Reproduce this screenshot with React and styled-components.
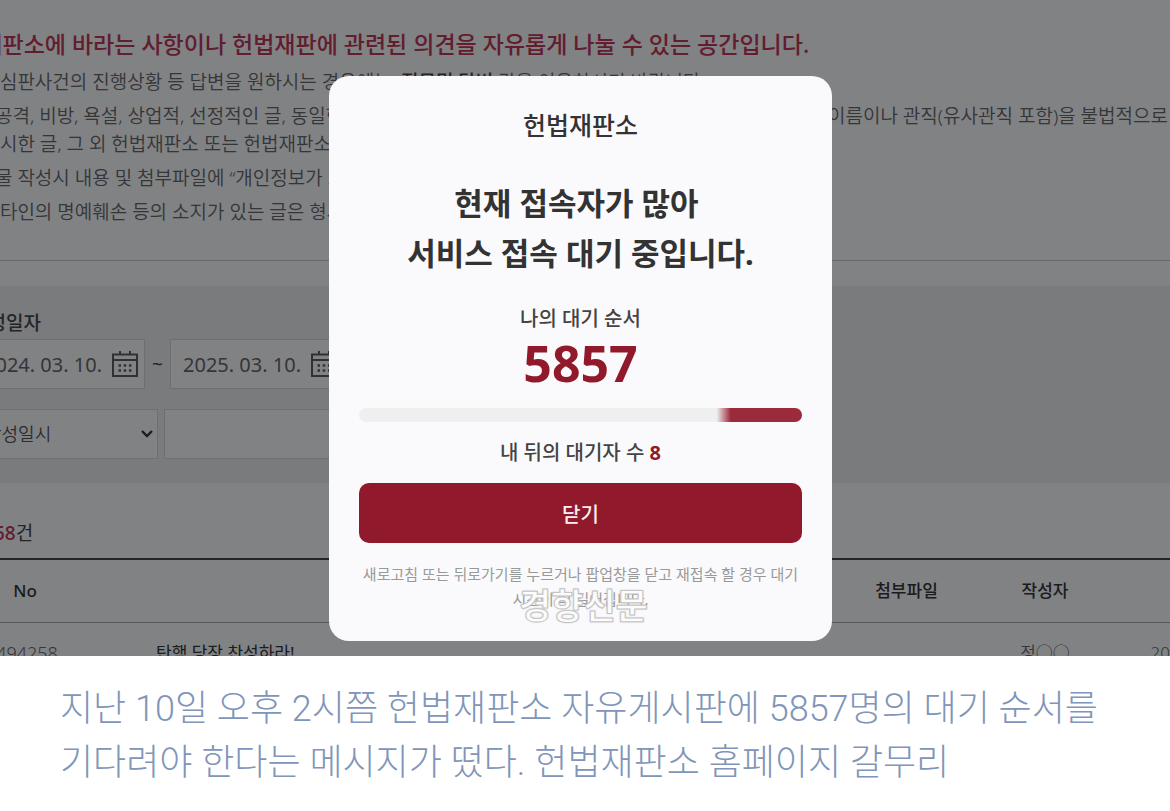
import React, { useState } from 'react'
import styled, { createGlobalStyle } from 'styled-components'

function App() {
    const [open, setOpen] = useState(true)
    return (
        <Article>
            <GlobalStyle />
            <Screen>
                <Board>
                    <Notice>
                        <h2>헌법재판소에 바라는 사항이나 헌법재판에 관련된 의견을 자유롭게 나눌 수 있는 공간입니다.</h2>
                        <ul>
                            <li>헌법 심판사건의 진행상황 등 답변을 원하시는 경우에는, <b>질문및 답변</b> 란을 이용하시기 바랍니다.</li>
                            <li>
                                <SplitLine>
                                    <span>인신공격, 비방, 욕설, 상업적, 선정적인 글, 동일한 내용의 글, 타인의</span>
                                    <span>이름이나 관직(유사관직 포함)을 불법적으로</span>
                                </SplitLine>
                                을 표시한 글, 그 외 헌법재판소 또는 헌법재판소의 운영에 반하는 글
                            </li>
                            <li>게시물 작성시 내용 및 첨부파일에 “개인정보가 포함되지 않도록 하시고</li>
                            <li>또한 타인의 명예훼손 등의 소지가 있는 글은 형사처벌을 받을 수 있습니다.</li>
                        </ul>
                    </Notice>
                    <Search>
                        <Label htmlFor="from">작성일자</Label>
                        <Row>
                            <DateBox>
                                <DateInput id="from" type="text" defaultValue="2024. 03. 10." />
                                <Calendar />
                            </DateBox>
                            <Tilde>~</Tilde>
                            <DateBox>
                                <DateInput type="text" aria-label="종료일" defaultValue="2025. 03. 10." />
                                <Calendar />
                            </DateBox>
                        </Row>
                        <Row>
                            <SelectBox>
                                <Select aria-label="정렬">
                                    <option>작성일시</option>
                                </Select>
                                <Chevron viewBox="0 0 14 10">
                                    <path d="M2 2l5 5 5-5" fill="none" stroke="#333" strokeWidth="2.4" />
                                </Chevron>
                            </SelectBox>
                            <Keyword type="text" aria-label="검색어" />
                        </Row>
                    </Search>
                    <Count>총 <b>494258</b>건</Count>
                    <Table>
                        <colgroup>
                            <col width="194" />
                            <col />
                            <col width="139" />
                            <col width="138" />
                            <col width="168" />
                        </colgroup>
                        <thead>
                            <tr>
                                <th>No</th>
                                <th>제목</th>
                                <th>첨부파일</th>
                                <th>작성자</th>
                                <th>일시</th>
                            </tr>
                        </thead>
                        <tbody>
                            <tr>
                                <Number>494258</Number>
                                <Subject><a href="#">탄핵 당장 찬성하라!</a></Subject>
                                <td></td>
                                <td>정○○</td>
                                <td>2025. 03. 10</td>
                            </tr>
                        </tbody>
                    </Table>
                </Board>
                {open && (
                    <Overlay>
                        <Dialog role="dialog" aria-label="헌법재판소">
                            <Site>헌법재판소</Site>
                            <Message>현재 접속자가 많아&nbsp;<br />서비스 접속 대기 중입니다.</Message>
                            <Info>나의 대기 순서</Info>
                            <Order>5857</Order>
                            <Bar role="progressbar" aria-label="대기 진행"><i /></Bar>
                            <Info>내 뒤의 대기자 수 <b>8</b></Info>
                            <Close onClick={() => setOpen(false)}>닫기</Close>
                            <Guide>새로고침 또는 뒤로가기를 누르거나 팝업창을 닫고 재접속 할 경우 대기시간이 더 길어집니다.</Guide>
                            <Watermark>경향신문</Watermark>
                        </Dialog>
                    </Overlay>
                )}
            </Screen>
            <Caption>
                지난 10일 오후 2시쯤 헌법재판소 자유게시판에 5857명의 대기 순서를 기다려야 한다는 메시지가 떴다. 헌법재판소 홈페이지 갈무리
            </Caption>
        </Article>
    )
}

function Calendar() {
    return (
        <CalendarIcon viewBox="0 0 26 26">
            <path d="M1 3.5h24v21.5h-24z" fill="none" stroke="#5c5c5c" strokeWidth="2" />
            <path d="M1 9h24M8 0v4M18 0v4" fill="none" stroke="#5c5c5c" strokeWidth="2" />
            <path d="M6.5 14.5h13M6.5 19.5h13" fill="none" stroke="#5c5c5c" strokeWidth="2.5" strokeDasharray="2.5 2.7" />
        </CalendarIcon>
    )
}

export default App

const GlobalStyle = createGlobalStyle`
*{
    box-sizing: border-box;
}
body{
    margin: 0;
    background: #fff;
    font-family: "Noto Sans", "Noto Sans CJK KR", sans-serif;
}
h2, ul, p{
    margin: 0;
    padding: 0;
}
input, select, button{
    font-family: inherit;
}
`

const Article = styled.figure`
margin: 0;
`

const Screen = styled.div`
position: relative;
aspect-ratio: 1170 / 656;
overflow: hidden;
`

/* the board runs past both sides of the screen */
const Board = styled.div`
margin: 0 -112px 0 -72px;
color: #666;
`

const Notice = styled.section`
padding: 26px 114px 34px 32px;
border-bottom: 1px solid #ccc;
white-space: nowrap;
h2{
    margin: 0 0 6px -21px;
    font-size: 23px;
    line-height: 36px;
    font-weight: 500;
    color: #c03452;
}
ul{
    display: flex;
    flex-direction: column;
    gap: 6px;
    list-style: none;
    font-size: 19px;
    line-height: 28px;
    font-weight: 350;
}
b{
    font-weight: 500;
    color: #444;
}
`

const SplitLine = styled.div`
display: flex;
justify-content: space-between;
`

const Search = styled.section`
display: flex;
flex-direction: column;
gap: 20px;
margin-top: 25px;
padding: 23px 43px 24px;
background: #f0f0f0;
`

const Label = styled.label`
margin-bottom: -18px;
font-size: 19px;
line-height: 28px;
font-weight: 500;
color: #444;
`

const Row = styled.div`
display: flex;
align-items: center;
gap: 6px;
`

const DateBox = styled.div`
display: flex;
align-items: center;
width: 174px;
height: 50px;
padding: 0 6px 0 12px;
border: 1px solid #d8d8d8;
background: #fff;
`

const DateInput = styled.input`
flex: 1;
min-width: 0;
padding: 0;
border: 0;
background: none;
font-size: 20px;
font-weight: 400;
color: #666;
`

const CalendarIcon = styled.svg`
width: 26px;
height: 26px;
`

const Tilde = styled.span`
width: 13px;
text-align: center;
font-size: 19px;
color: #444;
`

const SelectBox = styled.div`
display: grid;
align-items: center;
width: 187px;
> *{
    grid-area: 1 / 1;
}
`

const Select = styled.select`
appearance: none;
height: 50px;
padding: 0 13px;
border: 1px solid #d8d8d8;
border-radius: 0;
background: #fff;
font-size: 18px;
font-weight: 350;
color: #555;
`

const Chevron = styled.svg`
width: 14px;
height: 10px;
margin-right: 4px;
justify-self: end;
pointer-events: none;
`

const Keyword = styled.input`
width: 50%;
height: 50px;
border: 1px solid #d8d8d8;
background: #fff;
font-size: 19px;
`

const Count = styled.p`
padding: 36px 0 11px;
font-size: 19px;
line-height: 28px;
color: #444;
b{
    font-weight: 500;
    color: #c03452;
}
`

const Table = styled.table`
width: 100%;
table-layout: fixed;
border-collapse: collapse;
border-top: 2px solid #444;
font-size: 17px;
line-height: 28px;
text-align: center;
th{
    padding: 17px 0;
    border-bottom: 1px solid #aaa;
    font-weight: 500;
    color: #333;
}
td{
    padding: 16px 0;
    font-weight: 350;
}
`

const Number = styled.td`
padding-left: 4px !important;
font-size: 18px;
`

const Subject = styled.td`
padding-left: 34px !important;
text-align: left;
a{
    color: #333;
    font-weight: 400;
    text-decoration: none;
}
`

const Overlay = styled.div`
position: absolute;
inset: 0;
display: flex;
justify-content: center;
align-items: flex-start;
padding: 76px 9px 0 0;
background: rgba(4, 6, 10, .5);
`

const Dialog = styled.div`
position: relative;
display: flex;
flex-direction: column;
width: 503px;
padding: 31px 30px 29px;
border-radius: 20px;
background: #fafafc;
text-align: center;
color: #333;
`

const Site = styled.p`
font-size: 25px;
line-height: 36px;
font-weight: 500;
`

const Message = styled.h2`
margin: 35px 0 27px !important;
font-size: 31px;
line-height: 50px;
font-weight: 700;
`

const Info = styled.p`
font-size: 20px;
line-height: 28px;
font-weight: 500;
color: #444;
b{
    color: #901a2b;
}
`

const Order = styled.strong`
font-size: 50px;
line-height: 60px;
font-weight: 700;
color: #901a2b;
`

const Bar = styled.div`
display: flex;
justify-content: flex-end;
height: 14px;
margin: 15px 0 17px;
border-radius: 7px;
background: #efeff0;
overflow: hidden;
i{
    width: 20%;
    background: linear-gradient(90deg, transparent 4%, #9b2a3a 20%);
}
`

const Close = styled.button`
height: 60px;
margin: 16px 0 19px;
border: 0;
border-radius: 10px;
background: #901a2b;
font-size: 20px;
font-weight: 500;
color: #fbeef0;
cursor: pointer;
`

const Guide = styled.p`
font-size: 15px;
line-height: 25px;
color: #999;
word-break: break-all;
`

const Watermark = styled.span`
position: absolute;
left: 0;
right: 0;
bottom: 10px;
padding-left: 6px;
font-size: 35px;
line-height: 50px;
font-weight: 700;
color: #fcfcfc;
-webkit-text-stroke: 1px #c4c4c4;
text-shadow: 0 0 2px #bbb;
`

const Caption = styled.figcaption`
padding: 26px 60px;
font-family: Roboto, "Noto Sans CJK KR", sans-serif;
font-size: 36px;
line-height: 54px;
font-weight: 300;
color: #8095b8;
word-break: keep-all;
`
